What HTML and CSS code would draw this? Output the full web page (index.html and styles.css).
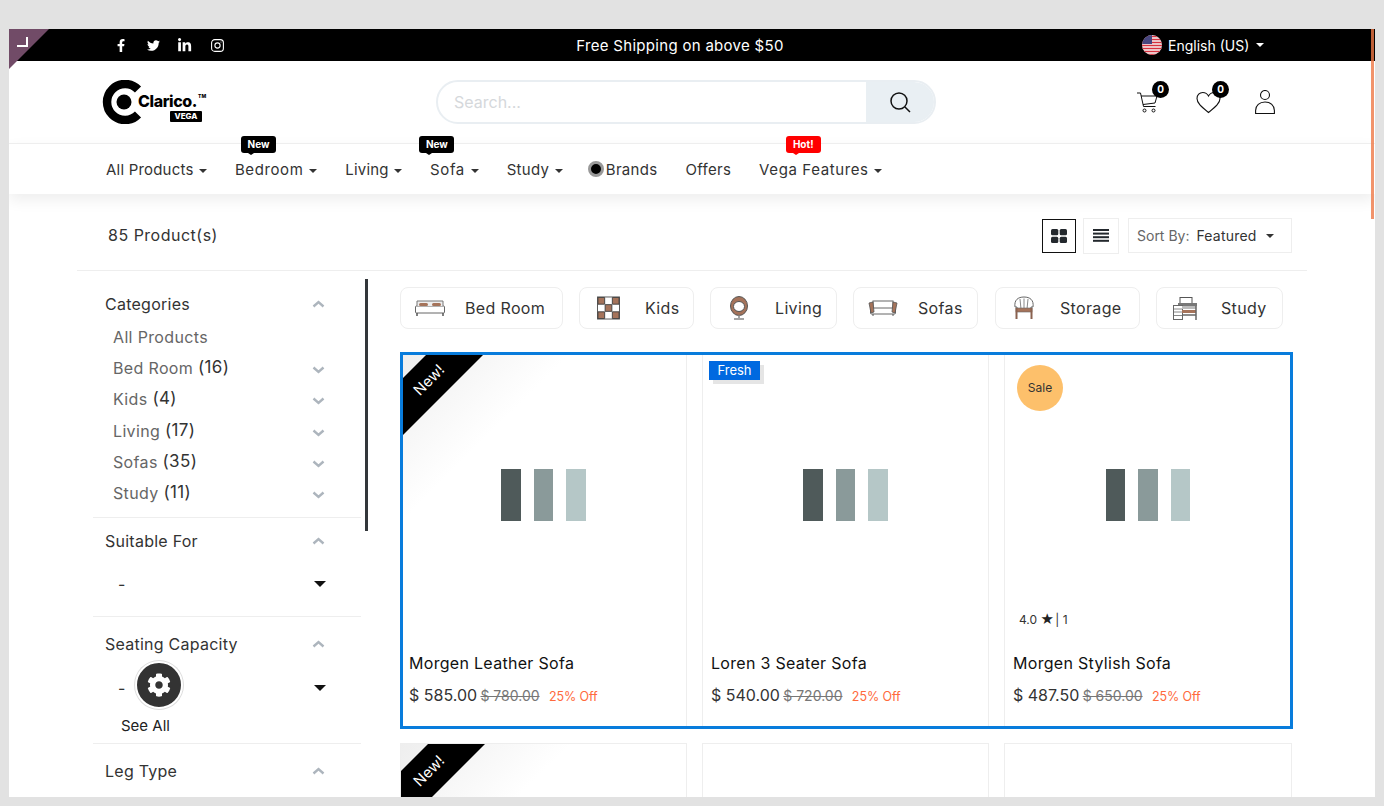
FILE: index.html
```html
<!DOCTYPE html>
<html lang="en">
<head>
    <meta charset="UTF-8">
    <title>Clarico Vega - Shop</title>
    <link rel="stylesheet" href="styles.css">
</head>
<body>
    <div class="screen">
        <div class="corner">
            <svg width="14" height="14" viewBox="0 0 14 14"><path d="M12 2v9H2" fill="none" stroke="#fff" stroke-width="2"/></svg>
        </div>
        <div class="page-scroll"></div>

        <div class="topbar">
            <div class="social">
                <a class="social-link"><svg height="13" viewBox="0 0 320 512"><path fill="#fff" d="M279.14 288l14.22-92.66h-88.91v-60.13c0-25.35 12.42-50.06 52.24-50.06h40.42V6.26S260.43 0 225.36 0c-73.22 0-121.08 44.38-121.08 124.72v70.62H22.89V288h81.39v224h100.17V288z"/></svg></a>
                <a class="social-link"><svg height="13" viewBox="0 0 512 512"><path fill="#fff" d="M459.37 151.716c.325 4.548.325 9.097.325 13.645 0 138.72-105.583 298.558-298.558 298.558-59.452 0-114.68-17.219-161.137-47.106 8.447.974 16.568 1.299 25.34 1.299 49.055 0 94.213-16.568 130.274-44.832-46.132-.975-84.792-31.188-98.112-72.772 6.498.974 12.995 1.624 19.818 1.624 9.421 0 18.843-1.3 27.614-3.573-48.081-9.747-84.143-51.98-84.143-102.985v-1.299c13.969 7.797 30.214 12.67 47.431 13.319-28.264-18.843-46.781-51.005-46.781-87.391 0-19.492 5.197-37.36 14.294-52.954 51.655 63.675 129.3 105.258 216.365 109.807-1.624-7.797-2.599-15.918-2.599-24.04 0-57.828 46.782-104.934 104.934-104.934 30.213 0 57.502 12.67 76.67 33.137 23.715-4.548 46.456-13.32 66.599-25.34-7.798 24.366-24.366 44.833-46.132 57.827 21.117-2.273 41.584-8.122 60.426-16.243-14.292 20.791-32.161 39.308-52.628 54.253z"/></svg></a>
                <a class="social-link"><svg height="15" viewBox="0 0 448 512"><path fill="#fff" d="M100.28 448H7.4V148.9h92.88zM53.79 108.1C24.09 108.1 0 83.5 0 53.8a53.79 53.79 0 0 1 107.58 0c0 29.7-24.1 54.3-53.79 54.3zM447.9 448h-92.68V302.4c0-34.7-.7-79.2-48.29-79.2-48.29 0-55.69 37.7-55.69 76.7V448h-92.78V148.9h89.08v40.8h1.3c12.4-23.5 42.69-48.3 87.88-48.3 94 0 111.28 61.9 111.28 142.3V448z"/></svg></a>
                <a class="social-link"><svg width="13" height="13" viewBox="0 0 13 13" fill="none" stroke="#fff"><rect x=".6" y=".6" width="11.8" height="11.8" rx="3.2" stroke-width="1.1"/><circle cx="6.5" cy="6.5" r="2.6" stroke-width="1.1"/><circle cx="10" cy="3" r=".5" fill="#fff" stroke="none"/></svg></a>
            </div>
            <div class="promo">Free Shipping on above $50</div>
            <div class="lang">
                <svg class="flag" width="20" height="20" viewBox="0 0 20 20">
                    <defs><clipPath id="flag-clip"><circle cx="10" cy="10" r="10"/></clipPath></defs>
                    <g clip-path="url(#flag-clip)">
                        <rect width="20" height="20" fill="#f5f5f5"/>
                        <path d="M0 1.5h20M0 4.5h20M0 7.5h20M0 10.5h20M0 13.5h20M0 16.5h20M0 19.5h20" stroke="#d8313f" stroke-width="1.5"/>
                        <rect width="10" height="9" fill="#46467f"/>
                    </g>
                </svg>
                <span>English (US)</span>
                <i class="caret caret-white"></i>
            </div>
        </div>

        <header class="header">
            <a class="logo">
                <svg width="44" height="44" viewBox="0 0 44 44">
                    <path d="M37 9.5A18 18 0 1 0 37 34.500" fill="none" stroke="#000" stroke-width="8.500"/>
                    <circle cx="23" cy="22" r="7.500" fill="#000"/>
                </svg>
                <div class="logo-words">
                    <div class="logo-name">Clarico.<sup>TM</sup></div>
                    <div class="logo-vega">VEGA</div>
                </div>
            </a>
            <div class="search">
                <div class="search-input">Search...</div>
                <div class="search-btn">
                    <svg width="22" height="22" viewBox="0 0 22 22" fill="none" stroke="#111" stroke-width="1.500"><circle cx="10" cy="10" r="8"/><path d="M16 16l5 5"/></svg>
                </div>
            </div>
            <div class="header-icons">
                <a class="icon-btn cart">
                    <svg width="24" height="24" viewBox="0 0 24 24" fill="none" stroke="#111" stroke-width="1"><path d="M1 3h3.500l3 13.500h12"/><path d="M5 6h16l-2 7-12 1.500"/><circle cx="8.500" cy="20.500" r="1.500"/><circle cx="17.500" cy="20.500" r="1.500"/></svg>
                    <span class="count">0</span>
                </a>
                <a class="icon-btn wish">
                    <svg width="25" height="24" viewBox="0 0 25 24" fill="none" stroke="#111" stroke-width="1.100"><path d="M12.500 22.500C5 16.500 1 13 1 8.500 1 5 3.500 2.500 6.800 2.500c2.400 0 4.500 1.300 5.700 3.500 1.200-2.200 3.300-3.500 5.700-3.500C21.500 2.500 24 5 24 8.500c0 4.500-4 8-11.500 14z"/></svg>
                    <span class="count">0</span>
                </a>
                <a class="icon-btn user">
                    <svg width="20" height="24" viewBox="0 0 20 24" fill="none" stroke="#111" stroke-width="1.100"><circle cx="10" cy="5" r="4.500"/><path d="M.6 23.500v-3C.6 15.500 4.500 12 10 12s9.400 3.500 9.400 8.500v3z"/></svg>
                </a>
            </div>
        </header>

        <nav class="nav">
            <a class="nav-item nav-tight">All Products <i class="caret"></i></a>
            <a class="nav-item nav-loose">Bedroom <i class="caret"></i><span class="nav-tag">New</span></a>
            <a class="nav-item nav-tight">Living <i class="caret"></i></a>
            <a class="nav-item nav-loose">Sofa <i class="caret"></i><span class="nav-tag">New</span></a>
            <a class="nav-item">Study <i class="caret"></i></a>
            <a class="nav-item nav-brands"><i class="brand-dot"></i>Brands</a>
            <a class="nav-item">Offers</a>
            <a class="nav-item nav-loose">Vega Features <i class="caret"></i><span class="nav-tag nav-tag-hot">Hot!</span></a>
        </nav>

        <div class="toolbar">
            <div class="result-count">85 Product(s)</div>
            <div class="view-btn view-btn-active">
                <svg width="16" height="14" viewBox="0 0 16 14" fill="#23282d"><rect width="7.300" height="6.300" rx="1.500"/><rect x="8.700" width="7.300" height="6.300" rx="1.500"/><rect y="7.700" width="7.300" height="6.300" rx="1.500"/><rect x="8.700" y="7.700" width="7.300" height="6.300" rx="1.500"/></svg>
            </div>
            <div class="view-btn">
                <svg width="16" height="13" viewBox="0 0 16 13" fill="#23282d"><rect width="16" height="2"/><rect y="3.600" width="16" height="2"/><rect y="7.200" width="16" height="2"/><rect y="10.800" width="16" height="2"/></svg>
            </div>
            <div class="sort">
                <span class="sort-label">Sort By:</span>
                <span class="sort-value">Featured</span>
                <i class="caret"></i>
            </div>
        </div>

        <div class="content">
            <aside class="sidebar">
                <div class="side-scroll"></div>
                <section class="filter filter-cats">
                    <div class="filter-title">Categories <svg class="chev" width="13" height="8" viewBox="0 0 13 8"><path d="M1.500 6.500l5-4.500 5 4.500" fill="none" stroke="#adb5bd" stroke-width="2.400"/></svg></div>
                    <ul class="cat-list">
                        <li class="cat-row"><span class="cat-name">All Products</span></li>
                        <li class="cat-row"><span class="cat-name">Bed Room <b>(16)</b></span><svg class="chev" width="13" height="8" viewBox="0 0 13 8"><path d="M1.500 1.500l5 4.500 5-4.500" fill="none" stroke="#adb5bd" stroke-width="2.400"/></svg></li>
                        <li class="cat-row"><span class="cat-name">Kids <b>(4)</b></span><svg class="chev" width="13" height="8" viewBox="0 0 13 8"><path d="M1.500 1.500l5 4.500 5-4.500" fill="none" stroke="#adb5bd" stroke-width="2.400"/></svg></li>
                        <li class="cat-row"><span class="cat-name">Living <b>(17)</b></span><svg class="chev" width="13" height="8" viewBox="0 0 13 8"><path d="M1.500 1.500l5 4.500 5-4.500" fill="none" stroke="#adb5bd" stroke-width="2.400"/></svg></li>
                        <li class="cat-row"><span class="cat-name">Sofas <b>(35)</b></span><svg class="chev" width="13" height="8" viewBox="0 0 13 8"><path d="M1.500 1.500l5 4.500 5-4.500" fill="none" stroke="#adb5bd" stroke-width="2.400"/></svg></li>
                        <li class="cat-row"><span class="cat-name">Study <b>(11)</b></span><svg class="chev" width="13" height="8" viewBox="0 0 13 8"><path d="M1.500 1.500l5 4.500 5-4.500" fill="none" stroke="#adb5bd" stroke-width="2.400"/></svg></li>
                    </ul>
                </section>
                <section class="filter filter-suit">
                    <div class="filter-title">Suitable For <svg class="chev" width="13" height="8" viewBox="0 0 13 8"><path d="M1.500 6.500l5-4.500 5 4.500" fill="none" stroke="#adb5bd" stroke-width="2.400"/></svg></div>
                    <div class="filter-select">- <i class="select-caret"></i></div>
                </section>
                <section class="filter filter-seat">
                    <div class="filter-title">Seating Capacity <svg class="chev" width="13" height="8" viewBox="0 0 13 8"><path d="M1.500 6.500l5-4.500 5 4.500" fill="none" stroke="#adb5bd" stroke-width="2.400"/></svg></div>
                    <div class="filter-select">- <i class="select-caret"></i></div>
                    <a class="see-all">See All</a>
                </section>
                <section class="filter filter-leg">
                    <div class="filter-title">Leg Type <svg class="chev" width="13" height="8" viewBox="0 0 13 8"><path d="M1.500 6.500l5-4.500 5 4.500" fill="none" stroke="#adb5bd" stroke-width="2.400"/></svg></div>
                </section>
                <a class="gear-btn">
                    <svg width="24" height="24" viewBox="0 0 512 512"><path fill="#fff" d="M487.4 315.7l-42.6-24.6c4.3-23.2 4.3-47 0-70.2l42.6-24.6c4.9-2.8 7.1-8.6 5.5-14-11.1-35.6-30-67.8-54.7-94.6-3.8-4.1-10-5.1-14.8-2.3L380.8 110c-17.900-15.400-38.500-27.300-60.800-35.100V25.800c0-5.600-3.900-10.500-9.400-11.700-36.700-8.200-74.300-7.800-109.200 0-5.500 1.200-9.400 6.100-9.400 11.700V75c-22.200 7.900-42.800 19.800-60.800 35.100L88.700 85.500c-4.900-2.800-11-1.900-14.800 2.300-24.700 26.700-43.600 58.900-54.700 94.600-1.700 5.400.6 11.200 5.500 14L67.300 221c-4.300 23.200-4.300 47 0 70.200l-42.600 24.600c-4.900 2.800-7.100 8.600-5.500 14 11.100 35.600 30 67.800 54.700 94.600 3.800 4.100 10 5.100 14.800 2.300l42.600-24.600c17.900 15.400 38.500 27.300 60.800 35.100v49.200c0 5.600 3.900 10.500 9.400 11.700 36.700 8.200 74.300 7.800 109.200 0 5.500-1.200 9.400-6.100 9.400-11.700v-49.200c22.200-7.900 42.800-19.800 60.800-35.100l42.600 24.600c4.900 2.800 11 1.900 14.800-2.300 24.700-26.700 43.600-58.900 54.700-94.600 1.500-5.500-.7-11.300-5.600-14.100zM256 336c-44.100 0-80-35.900-80-80s35.900-80 80-80 80 35.900 80 80-35.900 80-80 80z"/></svg>
                </a>
            </aside>

            <main class="main">
                <div class="chips">
                    <a class="chip chip-bed">
                        <svg width="30" height="18" viewBox="0 0 30 18"><rect x=".5" y="7" width="29" height="7" rx="1" fill="#fff" stroke="#666"/><path d="M2 7V2h26v5" fill="#eee" stroke="#777"/><rect x="4" y="4" width="9" height="3" rx="1.500" fill="#a5735a"/><rect x="17" y="4" width="9" height="3" rx="1.500" fill="#a5735a"/><path d="M2 14v3M28 14v3" stroke="#555" stroke-width="1.500"/></svg>
                        Bed Room
                    </a>
                    <a class="chip chip-kids">
                        <svg width="23" height="24" viewBox="0 0 24 24"><rect x=".5" y=".5" width="23" height="23" fill="#fff" stroke="#555"/><path fill="#a5735a" stroke="#444" d="M1 1h7v7H1zM16 1h7v7h-7zM8.500 8.500h7v7h-7zM1 16h7v7H1zM16 16h7v7h-7z"/></svg>
                        Kids
                    </a>
                    <a class="chip chip-living">
                        <svg width="20" height="24" viewBox="0 0 20 24"><ellipse cx="10" cy="10" rx="8.500" ry="9.500" fill="#a5735a" stroke="#555"/><ellipse cx="10" cy="10.500" rx="5.500" ry="5" fill="#fff" stroke="#555"/><path d="M10 19v3M5 23h10" stroke="#888" stroke-width="1.500"/></svg>
                        Living
                    </a>
                    <a class="chip chip-sofas">
                        <svg width="30" height="18" viewBox="0 0 30 18"><rect x="5" y="2" width="20" height="8" fill="#fff" stroke="#666"/><rect x="2.500" y="9" width="25" height="6" rx="1" fill="#fff" stroke="#666"/><path d="M1 4l4-1 1 10-3 1z" fill="#a5735a" stroke="#555" stroke-width=".8"/><path d="M29 4l-4-1-1 10 3 1z" fill="#a5735a" stroke="#555" stroke-width=".8"/><path d="M5 15v2M25 15v2" stroke="#555"/></svg>
                        Sofas
                    </a>
                    <a class="chip chip-storage">
                        <svg width="22" height="24" viewBox="0 0 22 24"><path d="M2 11C1 4 5 1 11 1s10 3 9 10h-2v3H4v-3z" fill="#fff" stroke="#666"/><path d="M7 3l1 10M11 2.500V13M15 3l-1 10" stroke="#888"/><rect x="3" y="12" width="16" height="4" fill="#a5735a" stroke="#666" stroke-width=".6"/><path d="M3.500 12v11M18.500 12v11" stroke="#8a6250" stroke-width="2"/></svg>
                        Storage
                    </a>
                    <a class="chip chip-study">
                        <svg width="24" height="23" viewBox="0 0 24 23"><rect x="7" y=".5" width="12" height="7" fill="#fff" stroke="#555"/><rect x="5" y="6" width="19" height="3" fill="#777"/><rect x=".5" y="8.500" width="9" height="14" fill="#fff" stroke="#666"/><path d="M1 12h8M1 15h8M1 18.500h8" stroke="#888"/><rect x="9" y="9" width="14" height="3" fill="#bbb"/><rect x="9" y="13" width="14" height="3" fill="#a5735a"/><path d="M23 9v14M9 18h14" stroke="#666" stroke-width="1.500"/></svg>
                        Study
                    </a>
                </div>

                <div class="product-row product-row-active">
                    <article class="product">
                        <div class="ribbon-shade"></div>
                        <div class="ribbon"></div>
                        <span class="ribbon-text">New!</span>
                        <div class="product-img"><i class="bar bar-1"></i><i class="bar bar-2"></i><i class="bar bar-3"></i></div>
                        <h3 class="product-name">Morgen Leather Sofa</h3>
                        <div class="product-price"><span class="price">$ 585.00</span> <del class="old-price">$ 780.00</del> <span class="off">25% Off</span></div>
                    </article>
                    <article class="product">
                        <span class="badge-fresh">Fresh</span>
                        <div class="product-img"><i class="bar bar-1"></i><i class="bar bar-2"></i><i class="bar bar-3"></i></div>
                        <h3 class="product-name">Loren 3 Seater Sofa</h3>
                        <div class="product-price"><span class="price">$ 540.00</span> <del class="old-price">$ 720.00</del> <span class="off">25% Off</span></div>
                    </article>
                    <article class="product">
                        <span class="badge-sale">Sale</span>
                        <div class="product-img"><i class="bar bar-1"></i><i class="bar bar-2"></i><i class="bar bar-3"></i></div>
                        <div class="rating">4.0 <span class="star">★</span> | 1</div>
                        <h3 class="product-name">Morgen Stylish Sofa</h3>
                        <div class="product-price"><span class="price">$ 487.50</span> <del class="old-price">$ 650.00</del> <span class="off">25% Off</span></div>
                    </article>
                </div>

                <div class="product-row">
                    <article class="product">
                        <div class="ribbon-shade"></div>
                        <div class="ribbon"></div>
                        <span class="ribbon-text">New!</span>
                    </article>
                    <article class="product"></article>
                    <article class="product"></article>
                </div>
            </main>
        </div>
    </div>
</body>
</html>
```

FILE: styles.css
```css
* {
    box-sizing: border-box;
}

html, body {
    height: 100%;
}

body {
    margin: 0;
    padding: 29px 9px 9px;
    background: #e2e2e2;
    font-family: Inter, "Noto Sans", sans-serif;
    color: #333;
    overflow: hidden;
}

a {
    color: inherit;
    text-decoration: none;
}

.screen {
    position: relative;
    width: 1366px;
    height: 768px;
    background: #fff;
    overflow: hidden;
}

/* purple corner + fake page scrollbar */
.corner {
    position: absolute;
    left: 0;
    top: 0;
    z-index: 5;
    width: 40px;
    height: 40px;
    padding: 6px 0 0 6px;
    background: #714b67;
    clip-path: polygon(0 0, 100% 0, 0 100%);
}

.corner svg {
    display: block;
}

.page-scroll {
    position: absolute;
    right: 1px;
    top: 0;
    z-index: 5;
    width: 3px;
    height: 190px;
    background: rgba(238, 120, 70, 0.8);
}

/* top bar */
.topbar {
    display: grid;
    grid-template-columns: 370px 410px auto;
    align-items: center;
    height: 32px;
    padding-left: 96px;
    background: #000;
    color: #fff;
    font-size: 14px;
}

.social {
    display: flex;
}

.social-link {
    display: flex;
    align-items: center;
    justify-content: center;
    width: 32px;
    height: 32px;
}

.promo {
    text-align: center;
    font-size: 15px;
    letter-spacing: 0.3px;
}

.lang {
    display: flex;
    align-items: center;
    gap: 6px;
    padding-left: 257px;
}

.caret {
    display: inline-block;
    margin-left: 1px;
    vertical-align: 2px;
    border-top: 4px solid currentColor;
    border-left: 4px solid transparent;
    border-right: 4px solid transparent;
}

.caret-white {
    color: #fff;
}

/* header */
.header {
    display: flex;
    align-items: center;
    height: 82px;
    padding-left: 92px;
}

.logo {
    display: flex;
    align-items: center;
    width: 335px;
    color: #000;
}

.logo svg {
    flex: none;
}

.logo-words {
    margin: 9px 0 0 -7px;
}

.logo-name {
    font-size: 16px;
    line-height: 20px;
    font-weight: 800;
    letter-spacing: -0.4px;
    white-space: nowrap;
}

.logo-name sup {
    margin-left: 1px;
    font-size: 5px;
    line-height: 0;
    letter-spacing: 0;
    vertical-align: 9px;
}

.logo-vega {
    width: 32px;
    margin-left: 32px;
    background: #000;
    border-radius: 1px;
    color: #fff;
    font-size: 8px;
    line-height: 11px;
    font-weight: 800;
    text-align: center;
}

.search {
    display: flex;
    width: 500px;
    height: 44px;
    border: 2px solid #e9eef2;
    border-radius: 22px;
    overflow: hidden;
}

.search-input {
    flex: 1;
    padding-left: 16px;
    color: #d5d8db;
    font-size: 16px;
    line-height: 40px;
}

.search-btn {
    display: flex;
    align-items: center;
    justify-content: center;
    width: 68px;
    background: #e9eff3;
}

.header-icons {
    display: flex;
    align-items: center;
    margin-left: 200px;
}

.icon-btn {
    position: relative;
    display: block;
    height: 24px;
}

.icon-btn svg {
    display: block;
}

.cart {
    width: 60px;
}

.wish {
    width: 59px;
}

.count {
    position: absolute;
    top: -9px;
    left: 16px;
    width: 17px;
    height: 17px;
    border-radius: 50%;
    background: #000;
    color: #fff;
    font-size: 10px;
    line-height: 17px;
    font-weight: 700;
    text-align: center;
}

/* main nav */
.nav {
    display: flex;
    align-items: center;
    gap: 28px;
    height: 51px;
    padding: 0 0 0 97px;
    border-top: 1px solid #eee;
    background: #fff;
    box-shadow: 0 6px 14px rgba(0, 0, 0, 0.07);
    font-size: 15px;
    letter-spacing: 0.3px;
    color: #333;
}

.nav-item {
    position: relative;
    white-space: nowrap;
}

.nav-tight {
    letter-spacing: 0.2px;
}

.nav-loose {
    letter-spacing: 0.6px;
}

.nav-tag {
    position: absolute;
    left: calc(50% - 35px);
    top: -24px;
    width: 35px;
    height: 17px;
    border-radius: 3px;
    background: #000;
    color: #fff;
    font-size: 10px;
    line-height: 17px;
    font-weight: 700;
    letter-spacing: 0;
    text-align: center;
}

.nav-tag::after {
    content: "";
    position: absolute;
    left: 7px;
    bottom: -2px;
    border-top: 2px solid #000;
    border-left: 3px solid transparent;
    border-right: 3px solid transparent;
}

.nav-tag-hot {
    background: #f00;
}

.nav-tag-hot::after {
    border-top-color: #f00;
}

.nav-brands {
    display: flex;
    align-items: center;
    gap: 2px;
    margin-left: -3px;
}

.brand-dot {
    width: 16px;
    height: 16px;
    border-radius: 50%;
    background: #000;
    border: 3px solid #999;
}

/* toolbar */
.toolbar {
    display: flex;
    align-items: center;
    height: 77px;
    margin: 0 68px;
    padding: 7px 15px 0 31px;
    border-bottom: 1px solid #eee;
}

.result-count {
    flex: 1;
    margin-bottom: 2px;
    font-size: 16px;
    letter-spacing: 0.5px;
    color: #333;
}

.view-btn {
    display: flex;
    align-items: center;
    justify-content: center;
    width: 36px;
    height: 36px;
    margin-right: 7px;
    border: 1px solid #eee;
}

.view-btn-active {
    width: 34px;
    height: 34px;
    border-color: #111;
}

.sort {
    display: flex;
    align-items: center;
    width: 164px;
    height: 35px;
    margin-left: 2px;
    padding-left: 8px;
    border: 1px solid #eee;
    font-size: 14px;
}

.sort-label {
    color: #666;
}

.sort-value {
    margin: 0 8px 0 7px;
    letter-spacing: 0.2px;
    color: #333;
}

/* content columns */
.content {
    display: flex;
    padding-left: 84px;
}

.sidebar {
    position: relative;
    flex: none;
    width: 268px;
}

.side-scroll {
    position: absolute;
    left: 272px;
    top: 8px;
    width: 3px;
    height: 252px;
    background: #33373b;
}

.filter {
    border-bottom: 1px solid #eee;
}

.filter-cats {
    padding: 21px 0 8.5px;
}

.filter-suit {
    padding: 11px 0 20px;
}

.filter-seat {
    padding: 15px 0 5px;
}

.filter-leg {
    padding-top: 15px;
    border-bottom: 0;
}

.filter-title {
    display: flex;
    align-items: center;
    justify-content: space-between;
    padding: 0 36px 0 12px;
    font-size: 16px;
    line-height: 24px;
    letter-spacing: 0.25px;
    color: #333;
}

.cat-list {
    margin: 5.5px 0 0;
    padding: 0;
    list-style: none;
}

.cat-row {
    display: flex;
    align-items: center;
    justify-content: space-between;
    height: 31.2px;
    padding: 0 36px 0 20px;
}

.cat-row .chev {
    margin-top: 4px;
}

.cat-name {
    font-size: 16px;
    letter-spacing: 0.35px;
    color: #666;
}

.cat-name b {
    font-size: 17px;
    font-weight: 400;
    color: #333;
    position: relative;
    top: -1px;
}

.chev {
    flex: none;
}

.filter-select {
    display: flex;
    align-items: center;
    justify-content: space-between;
    height: 24px;
    margin-top: 19px;
    padding: 0 35px 0 25px;
    font-size: 16px;
    color: #333;
}

.filter-seat .filter-select {
    margin-top: 20px;
}

.select-caret {
    border-top: 6px solid #111;
    border-left: 6px solid transparent;
    border-right: 6px solid transparent;
}

.see-all {
    display: block;
    margin-top: 14px;
    padding-left: 28px;
    font-size: 15px;
    line-height: 24px;
    color: #222;
}

.gear-btn {
    position: absolute;
    left: 42px;
    top: 390px;
    display: flex;
    align-items: center;
    justify-content: center;
    width: 48px;
    height: 48px;
    border: 2px solid #fff;
    border-radius: 50%;
    background: #333;
    box-shadow: 0 0 0 1px #ddd;
}

/* main column */
.main {
    flex: none;
    width: 892px;
    margin-left: 39px;
    padding-top: 16px;
}

.chips {
    display: flex;
    margin-bottom: 23px;
}

.chip {
    display: flex;
    align-items: center;
    height: 42px;
    margin-right: 16px;
    padding-left: 14px;
    border: 1px solid #eee;
    border-radius: 8px;
    font-size: 16px;
    letter-spacing: 0.35px;
    color: #333;
}

.chip svg {
    flex: none;
    margin-right: 20px;
}

.chip-bed { width: 163px; }
.chip-kids { width: 115px; padding-left: 17px; }
.chip-living { width: 127px; padding-left: 18px; }
.chip-sofas { width: 125px; margin-right: 17px; }
.chip-storage { width: 145px; padding-left: 17px; }
.chip-study { width: 127px; padding-left: 16px; margin-right: 0; }

.chip-kids svg { margin-right: 25px; }
.chip-living svg { margin-right: 26px; }
.chip-storage svg { margin-right: 25px; }
.chip-study svg { margin-right: 24px; }

.product-row {
    position: relative;
    display: grid;
    grid-template-columns: 287px 287px 288px;
    gap: 15px;
    margin-bottom: 14px;
}

/* blue frame sits over the cards of the row */
.product-row-active::after {
    content: "";
    position: absolute;
    left: 0;
    top: 0;
    right: -1px;
    bottom: 0;
    z-index: 2;
    border: 3px solid #087cdc;
    pointer-events: none;
}

.product {
    position: relative;
    height: 377px;
    border: 1px solid #eee;
    padding: 0 8px;
    overflow: hidden;
}

.product-img {
    display: flex;
    align-items: center;
    justify-content: center;
    gap: 13px;
    height: 283px;
    margin-bottom: 15px;
}

.bar {
    width: 19.5px;
    height: 52px;
}

.bar-1 { background: #4f5a5a; }
.bar-2 { background: #8a9a9a; }
.bar-3 { background: #b5c7c7; }

.product-name {
    margin: 0 0 8px;
    font-size: 16px;
    line-height: 24px;
    font-weight: 400;
    letter-spacing: 0.3px;
    color: #111;
}

.product-price {
    font-size: 12px;
    line-height: 24px;
    white-space: nowrap;
}

.price {
    font-size: 16px;
    color: #333;
}

.old-price {
    font-size: 14px;
    color: #777;
}

.off {
    margin-left: 6px;
    font-size: 12.500px;
    letter-spacing: -0.1px;
    color: #ff6a3d;
}

/* ribbon, badges */
.ribbon-shade {
    position: absolute;
    left: 0;
    top: 0;
    width: 170px;
    height: 170px;
    background: linear-gradient(135deg, #eee 0, rgba(255, 255, 255, 0) 50%);
}

.ribbon {
    position: absolute;
    left: 0;
    top: 0;
    width: 84px;
    height: 84px;
    background: #000;
    clip-path: polygon(27px 0, 100% 0, 0 100%, 0 27px);
}

.ribbon-text {
    position: absolute;
    left: 8px;
    top: 17px;
    width: 40px;
    color: #fff;
    font-size: 15px;
    line-height: 20px;
    text-align: center;
    transform: rotate(-45deg);
}

.badge-fresh {
    position: absolute;
    left: 6px;
    top: 8px;
    width: 51px;
    height: 19px;
    background: #0069e0;
    box-shadow: 4px 4px 0 #e5e5e5;
    color: #fff;
    font-size: 13px;
    line-height: 19px;
    text-align: center;
}

.badge-sale {
    position: absolute;
    left: 12px;
    top: 12px;
    width: 46px;
    height: 46px;
    border-radius: 50%;
    background: #fdc06b;
    color: #333;
    font-size: 12px;
    line-height: 46px;
    text-align: center;
}

.rating {
    position: absolute;
    left: 14px;
    top: 258px;
    font-size: 12px;
    line-height: 18px;
    color: #333;
}

.star {
    margin-right: -2px;
    font-family: "DejaVu Sans", sans-serif;
    font-size: 15px;
    line-height: 0;
    color: #222;
}
```
